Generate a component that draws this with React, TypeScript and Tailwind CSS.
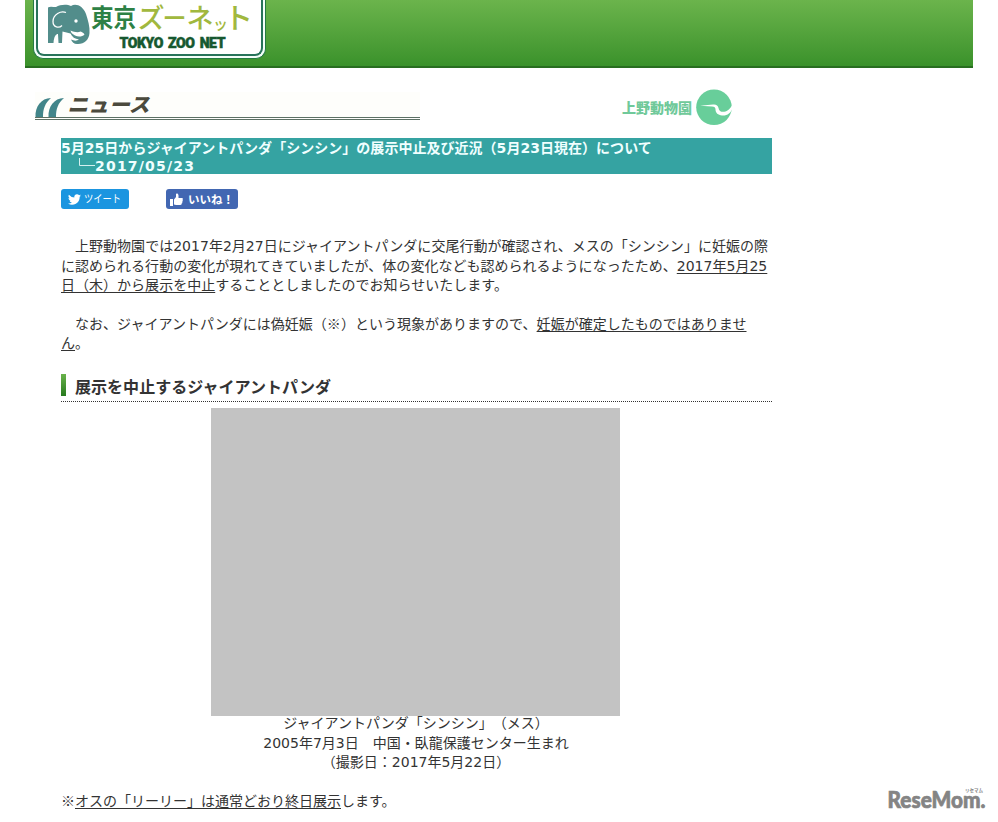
import type { ReactNode } from "react";

// Latin digits come from DejaVu Sans, Japanese glyphs fall through to Noto Sans CJK JP.
const bodyFont = "font-['DejaVu_Sans','Noto_Sans_CJK_JP',sans-serif]";

function U({ children }: { children: ReactNode }) {
  return <span className="underline decoration-1 underline-offset-2">{children}</span>;
}

// DejaVu has its own, narrower ※, so the mark is set in the Japanese face.
function Kome() {
  return <span className="font-['Noto_Sans_CJK_JP',sans-serif] leading-none">※</span>;
}

function SiteLogo() {
  return (
    <div className="ml-2 h-[59px] w-[233px] rounded-b-[10px] border-x border-b border-[#257a42] bg-[#f4fffa] px-[2px] pb-[2px]">
      <div className="h-full rounded-b-lg border-x-2 border-b-2 border-[#28745b] bg-white">
        <svg
          width="223"
          height="54"
          viewBox="38 0 223 54"
          className="block overflow-visible"
          fontFamily="'Noto Sans CJK JP', sans-serif"
        >
          <path
            fill="#528d8b"
            d="M48 7.500C50 6 53 7 56 7C60 4.500 67 4 71 6C76 3 83 6 86 14C88 20 90 27 89.500 33C89 40 84 44.500 77 44C74 44 72 42 71 39.500C74 41 77 41 79 39.500C75 39 72 37 70.500 33.500L62.500 31.500L62 43H58.500L58 34C56 34 54 36 53.500 43H48Z"
          />
          <path
            fill="none"
            stroke="#fff"
            strokeWidth="1.300"
            d="M66 12.500C61 10.500 53 14 53 21.500C53 27.500 59 28.500 62 25.500"
          />
          <circle cx="76" cy="21" r="1.700" fill="#fff" />
          <path fill="#fff" d="M70.500 30.500C74 32 78 33 80.500 31.500C82 32 84 33 84.500 34.500C82 37 78 37 75 35.500C72 34 71 32.500 70.500 30.500Z" />
          <text x="91" y="27" fontSize="24.500" fontWeight="700" fill="#2d8145" textLength="45" lengthAdjust="spacingAndGlyphs">
            東京
          </text>
          <g fill="#a1b83e" fontSize="27" fontWeight="500">
            <text x="137.500" y="28">ズ</text>
            <text x="162.500" y="27" fontSize="24">ー</text>
            <text x="186.500" y="28">ネ</text>
            <text x="213" y="29" fontSize="15">ッ</text>
            <text x="224" y="28.500" fontSize="29">ト</text>
          </g>
          <text
            x="119.500"
            y="47.800"
            fontSize="14"
            fontWeight="900"
            fontFamily="Roboto, sans-serif"
            fill="#16582f"
            stroke="#16582f"
            strokeWidth="0.500"
            wordSpacing="2"
            textLength="106"
          >
            TOKYO ZOO NET
          </text>
        </svg>
      </div>
    </div>
  );
}

function NewsBanner() {
  return (
    <svg width="385" height="28" viewBox="35 92 385 28" className="block overflow-visible bg-[#fefefb]">
      <path fill="#42858a" d="M35.500 117C35 107 41 98 51 98C45 103 43 109 43 117Z" />
      <path fill="#42858a" d="M48.500 117C48 107 54 98 64 98C58 103 56 109 56 117Z" />
      <text
        x="67.500"
        y="111.500"
        fontSize="20"
        fontWeight="900"
        fontStyle="italic"
        fill="#4b4a3d"
        fontFamily="'Noto Sans CJK JP', sans-serif"
        textLength="82"
        lengthAdjust="spacingAndGlyphs"
      >
        ニュース
      </text>
      <path stroke="#5c7064" d="M35 117.500H420M35 119.500H420" />
    </svg>
  );
}

function UenoLogo() {
  return (
    <svg width="114" height="38" viewBox="621 88 114 38" className="block">
      <text
        x="622"
        y="113"
        fontSize="14"
        fontWeight="900"
        fill="#70c99a"
        fontFamily="'Noto Sans CJK JP', sans-serif"
        textLength="70"
      >
        上野動物園
      </text>
      <circle cx="714" cy="107.300" r="17.800" fill="#68ce9a" />
      <path
        fill="#fff"
        d="M700 105.700L713 104.500C716 104 718 105.500 718.500 108C719 111.500 722 112.500 725.500 111.500C729 110.500 731 107 733 104L732.500 108C731 113 727 116 722 115.500C718 115 715.500 113 715.500 109.500C715.500 107.500 714.500 106.700 712 106.500Z"
      />
    </svg>
  );
}

function TweetButton() {
  return (
    <div className="flex h-5 w-[68px] items-center gap-[3px] rounded-[3px] bg-[#1b95e0] pl-[7px] text-white">
      <svg width="13" height="13" viewBox="0 0 24 24" fill="currentColor">
        <path d="M24 4.600a10 10 0 0 1-2.800.8 5 5 0 0 0 2.100-2.700 10 10 0 0 1-3.100 1.200 4.900 4.900 0 0 0-8.400 4.500A14 14 0 0 1 1.700 3.200a4.900 4.900 0 0 0 1.500 6.500 5 5 0 0 1-2.200-.6c0 2.400 1.600 4.400 3.900 4.900a5 5 0 0 1-2.200.1 4.900 4.900 0 0 0 4.600 3.400A9.900 9.900 0 0 1 0 19.500 14 14 0 0 0 21.500 7.100 10 10 0 0 0 24 4.600Z" />
      </svg>
      <svg width="38" height="18" fill="currentColor">
        <text x="0" y="12.500" fontSize="11" fontFamily="'Noto Sans CJK JP', sans-serif" textLength="37" lengthAdjust="spacingAndGlyphs">
          ツイート
        </text>
      </svg>
    </div>
  );
}

function LikeButton() {
  return (
    <div className="flex h-5 w-[72px] items-center gap-[5px] rounded-[3px] bg-[#4267b2] pl-1 text-white">
      <svg width="13" height="13" viewBox="0 0 13 13" fill="currentColor">
        <path d="M0 6H3V13H0ZM4 6.500L6 4V1C6 0 8.500 0 8.500 2.500V5H12C13 5 13.200 6.200 12.500 6.800C13 7.500 12.900 8.300 12.200 8.800C12.500 9.500 12.300 10.200 11.600 10.600C11.700 11.500 11.200 12 10.500 12H6L4 11.500Z" />
      </svg>
      <span className="w-[46px] whitespace-nowrap font-['Noto_Sans_CJK_JP',sans-serif] text-[11.500px] font-bold leading-5">
        いいね！
      </span>
    </div>
  );
}

function Watermark() {
  return (
    <svg
      width="104"
      height="28"
      viewBox="884 785 104 28"
      className="absolute left-[884px] top-[785px]"
      fill="#848484"
    >
      <text
        x="887.500"
        y="807.500"
        fontSize="22.500"
        fontWeight="900"
        fontFamily="Lato, sans-serif"
        stroke="#848484"
        strokeWidth="0.700"
        textLength="98"
        lengthAdjust="spacingAndGlyphs"
      >
        ReseMom.
      </text>
      <text x="965" y="792" fontSize="4.500" fontWeight="700" fontFamily="'Noto Sans CJK JP', sans-serif" textLength="18">
        リセマム
      </text>
    </svg>
  );
}

export default function App() {
  return (
    <div
      className={`relative h-[822px] w-[998px] overflow-hidden bg-white text-[14px] leading-[19.600px] text-[#333] [text-spacing-trim:space-all] ${bodyFont}`}
    >
      <header className="mx-[25px] h-[68px] border-b-2 border-[#286e20] bg-linear-to-b from-[#6bb44c] to-[#3a922b]">
        <SiteLogo />
      </header>

      <div className="ml-[35px] flex w-[700px] justify-between pt-5">
        <div className="pt-1">
          <NewsBanner />
        </div>
        <UenoLogo />
      </div>

      <main className="ml-[61px] w-[711px] whitespace-nowrap">
        <h1 className="mt-3 h-9 bg-[#35a3a2] pt-px font-bold leading-[18px] text-[#f0ffff]">
          <span className="block tracking-[0.030px]">
            5月25日からジャイアントパンダ「シンシン」の展示中止及び近況（5月23日現在）について
          </span>
          <span className="flex pl-[17px]">
            <svg width="17" height="17" className="shrink-0" fill="none" stroke="#d4f0f0">
              <path d="M1.500 1V8.500H17" />
            </svg>
            <span className="tracking-[1.200px]">2017/05/23</span>
          </span>
        </h1>

        <div className="mt-[15px] flex gap-[37px]">
          <TweetButton />
          <LikeButton />
        </div>

        <p className="mt-7 tracking-[0.020px]">
          {"\u3000"}上野動物園では2017年2月27日にジャイアントパンダに交尾行動が確認され、メスの「シンシン」に妊娠の際
          <br />
          に認められる行動の変化が現れてきていましたが、体の変化なども認められるようになったため、<U>2017年5月25</U>
          <br />
          <U>日（木）から展示を中止</U>することとしましたのでお知らせいたします。
        </p>
        <p className="mt-[19px] tracking-[0.020px]">
          {"\u3000"}なお、ジャイアントパンダには偽妊娠（<Kome />）という現象がありますので、<U>妊娠が確定したものではありませ</U>
          <br />
          <U>ん</U>。
        </p>

        <h2 className="mt-5 flex h-7 border-b border-dotted border-[#333] text-[16px] font-bold leading-[27px] tracking-[0.040px]">
          <span className="mr-[9px] h-[22px] w-[5px] bg-linear-to-b from-[#69b34b] to-[#267a1e]" />
          展示を中止するジャイアントパンダ
        </h2>

        <figure className="mt-1.5 text-center">
          <div className="ml-[150px] h-[308px] w-[409px] bg-[#c3c3c3]" />
          <figcaption className="-mt-[2px] w-[710px]">
            ジャイアントパンダ「シンシン」（メス）
            <br />
            2005年7月3日　中国・臥龍保護センター生まれ
            <br />
            （撮影日：2017年5月22日）
          </figcaption>
        </figure>

        <p className="mt-[19.500px]">
          <Kome />
          <U>オスの「リーリー」は通常どおり終日展示</U>します。
        </p>
      </main>

      <Watermark />
    </div>
  );
}
